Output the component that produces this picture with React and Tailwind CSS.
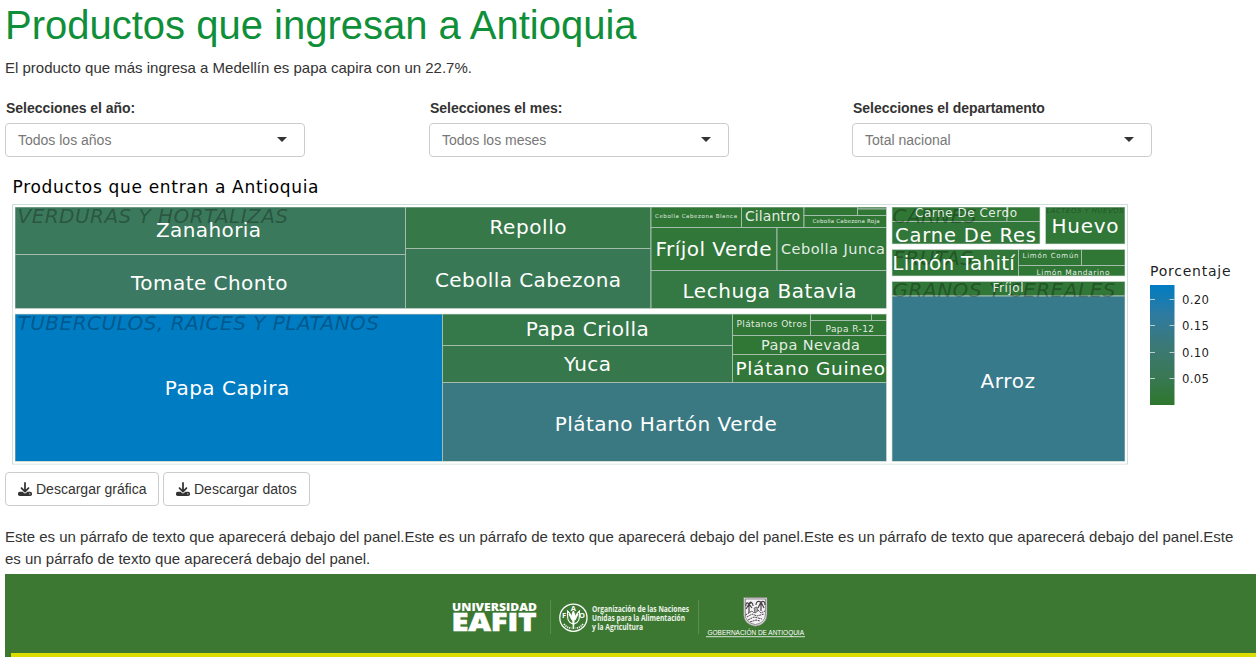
import { FaDownload } from "react-icons/fa6";

const LOW = "#307735";

// x, y, right, bottom, fill
const cells = [
  [15, 207, 405.5, 254.5, "#3b795c"],
  [15, 254.5, 405.5, 308.5, "#3c7963"],
  [405.5, 207, 651, 248.5, "#367848"],
  [405.5, 248.5, 651, 308.5, "#397855"],
  [651, 207, 741.5, 227.5, LOW],
  [741.5, 207, 804, 227.5, LOW],
  [804, 215.5, 886.5, 227.5, LOW],
  [804, 207, 857.5, 215.5, LOW],
  [857.5, 207, 886.5, 209, LOW],
  [857.5, 209, 886.5, 215.5, LOW],
  [651, 227.5, 777, 270.5, "#31773a"],
  [777, 227.5, 886.5, 270.5, "#31773a"],
  [651, 270.5, 886.5, 308.5, "#347843"],
  [15, 314, 442.5, 461.5, "#007cc3"],
  [442.5, 314, 732.5, 345.5, "#35784a"],
  [442.5, 345.5, 732.5, 382.5, "#36784b"],
  [442.5, 382.5, 886.5, 461.5, "#3a7982"],
  [732.5, 314, 810.5, 335.5, LOW],
  [810.5, 320.5, 886.5, 335.5, LOW],
  [810.5, 314, 871.5, 320.5, LOW],
  [871.5, 314, 886.5, 320.5, LOW],
  [732.5, 335.5, 886.5, 354.5, LOW],
  [732.5, 354.5, 886.5, 382.5, "#317739"],
  [892, 207, 1007, 221.5, LOW],
  [1007, 207, 1040, 221.5, LOW],
  [892, 221.5, 1040, 244, "#317739"],
  [1045.5, 207, 1125, 244, "#317738"],
  [892, 249.5, 1018.5, 276, "#317738"],
  [1018.5, 249.5, 1081.5, 265.5, LOW],
  [1081.5, 249.5, 1125, 265.5, LOW],
  [1018.5, 265.5, 1125, 276, LOW],
  [892, 281.5, 1125, 296, "#317738"],
  [892, 296, 1125, 461.5, "#377a8b"],
];

// text, x, baseline, width, size
const groups = [
  ["VERDURAS Y HORTALIZAS", 17.5, 223, 270.5, 20],
  ["TUBERCULOS, RAICES Y PLATANOS", 17.5, 330, 361.5, 20],
  ["CARNES", 892.5, 223, 84, 20],
  ["LACTEOS Y HUEVOS", 1046.5, 213, 77, 7],
  ["FRUTAS", 893, 265, 80, 20],
  ["GRANOS Y CEREALES", 892.5, 297, 223, 20],
];

const labels = [
  ["Zanahoria", 156, 237, 105, 20],
  ["Tomate Chonto", 131, 290, 156.5, 20],
  ["Repollo", 489.5, 234, 77, 20],
  ["Cebolla Cabezona", 435, 287, 186, 20],
  ["Cebolla Cabezona Blanca", 655, 218, 82, 5.5],
  ["Cilantro", 745, 221, 55, 14],
  ["Cebolla Cabezona Roja", 812.5, 223, 67, 5.5],
  ["Fríjol Verde", 655.5, 256, 116, 20],
  ["Cebolla Junca", 781, 254, 104, 14.5],
  ["Lechuga Batavia", 682.5, 298, 174, 20],
  ["Papa Capira", 164.8, 395, 124.5, 20],
  ["Papa Criolla", 525.8, 336, 123, 20],
  ["Yuca", 564, 371, 47, 20],
  ["Plátano Hartón Verde", 554.7, 431, 222, 20],
  ["Plátanos Otros", 736.5, 327, 70.5, 9],
  ["Papa R-12", 825.5, 332, 48.5, 9],
  ["Papa Nevada", 761, 350, 99, 14.5],
  ["Plátano Guineo", 735.5, 375, 149.5, 18.5],
  ["Carne De Cerdo", 915, 217, 102, 12],
  ["Carne De Res", 895, 241.5, 141, 19.5],
  ["Huevo", 1051.5, 233, 67, 20],
  ["Limón Tahití", 892.3, 269.5, 122.5, 20],
  ["Limón Común", 1022.5, 258, 56, 7],
  ["Limón Mandarino", 1036.5, 275, 73, 7.5],
  ["Fríjol", 992.5, 292, 31, 12],
  ["Arroz", 980.5, 388, 54.5, 20],
];

const ticks = [
  ["0.20", 299.5, 304],
  ["0.15", 325.5, 330],
  ["0.10", 352.5, 357],
  ["0.05", 378.5, 383],
];

function ChartText({ item, ...rest }) {
  const [text, x, y, width, size] = item;
  return (
    <text x={x} y={y} textLength={width} fontSize={size} {...rest}>
      {text}
    </text>
  );
}

function Treemap() {
  return (
    <svg
      viewBox="5 170 1251 302"
      className="block h-[302px] w-[1251px] font-['DejaVu_Sans',sans-serif]"
    >
      <defs>
        <linearGradient id="scale" x1="0" y1="0" x2="0" y2="1">
          <stop offset="0" stopColor="#007cc3" />
          <stop offset="0.25" stopColor="#2f7ba0" />
          <stop offset="0.5" stopColor="#3b7978" />
          <stop offset="0.75" stopColor="#3a7856" />
          <stop offset="1" stopColor="#2e772d" />
        </linearGradient>
      </defs>
      <ChartText item={["Productos que entran a Antioquia", 12.5, 193, 306, 17]} />
      <rect x="12.5" y="204.5" width="1115" height="259.5" fill="none" stroke="#cfdfdb" />
      {cells.map(([x, y, r, b, fill], i) => (
        <rect key={i} x={x} y={y} width={r - x} height={b - y} fill={fill} stroke="#a3bcab" strokeWidth="1" />
      ))}
      <g fill="none" stroke="#fff">
        <path d="M12.8 311.3H889.2M889.2 207V462M1042.8 207V247M889.2 246.8H1126M889.2 278.8H1126" strokeWidth="5" />
        <path d="M14 206H1126M14 462.5H1126M14 206V462.5M1126 206V462.5" strokeWidth="2" />
      </g>
      <g fill="#000" fillOpacity="0.3" fontStyle="italic">
        {groups.map((g) => (
          <ChartText key={g[0]} item={g} />
        ))}
      </g>
      <g fill="#fff">
        {labels.map((l) => (
          <ChartText key={l[0]} item={l} fillOpacity={l[4] < 16 ? 0.88 : 1} />
        ))}
      </g>
      <ChartText item={["Porcentaje", 1150, 276, 80.5, 14]} fillOpacity="0.9" />
      <rect x="1150" y="285" width="24.5" height="120" fill="url(#scale)" />
      {ticks.map(([label, ty, by]) => (
        <g key={label}>
          <path d={`M1150 ${ty}h5M1169.5 ${ty}h5`} stroke="#b9d0cf" />
          <ChartText item={[label, 1182, by, 27, 11.7]} fillOpacity="0.9" />
        </g>
      ))}
    </svg>
  );
}

function Select({ label, value, width }) {
  return (
    <div className={width}>
      <div className="mb-[5px] h-5 pl-px text-[14px] leading-5 font-bold tracking-[-0.04px]">{label}</div>
      <div className="flex h-[34px] w-[300px] items-center justify-between rounded border border-[#ccc] pr-[17px] pl-3 text-[14px] text-[#777]">
        <span>{value}</span>
        <svg viewBox="0 0 10 5" className="mb-px h-[5px] w-[10px]">
          <path d="M0 0H10L5 5Z" fill="#333" />
        </svg>
      </div>
    </div>
  );
}

function DownloadButton({ children, width }) {
  return (
    <button
      className={`flex h-[34px] items-center gap-1 rounded border border-[#ccc] bg-white pl-3 text-[14px] whitespace-nowrap ${width}`}
    >
      <FaDownload className="size-[14px] shrink-0" />
      <span>{children}</span>
    </button>
  );
}

function Logos() {
  return (
    <svg viewBox="440 590 380 60" className="block h-[60px] w-[380px]" fill="#fff">
      <g className="font-['Open_Sans',sans-serif]" fontWeight="800">
        <text x="452" y="610.5" fontSize="10.8" textLength="85" lengthAdjust="spacingAndGlyphs">UNIVERSIDAD</text>
        <text x="451.5" y="631.2" fontSize="24.5" textLength="85" lengthAdjust="spacingAndGlyphs" stroke="#fff" strokeWidth="0.6">EAFIT</text>
      </g>
      <path d="M550.5 600V634M698.5 600V634" stroke="#5b8d51" />
      <g fill="none" stroke="#fff">
        <circle cx="573.4" cy="617.7" r="13.6" strokeWidth="1.3" />
        <path d="M573.4 611V629" strokeWidth="1.6" />
        <path d="M573 624C566 622 568 616 567.5 611C571 614 573 618 573.4 624C574 618 576 614 579.5 611C579 616 581 622 574 624M569 614L572 620M578 614L575 620" strokeWidth="1.1" />
        <path d="M564 624Q567 628 571.5 628M583 624Q580 628 575.5 628" strokeWidth="1.6" strokeDasharray="1.3 .8" />
        <ellipse cx="573.4" cy="616" rx="1.7" ry="4" fill="#fff" strokeWidth=".5" strokeDasharray="1 .7" />
      </g>
      <g className="font-['Open_Sans',sans-serif]" fontWeight="700" fontSize="7.5">
        <text x="562" y="618">F</text>
        <text x="570.7" y="611">A</text>
        <text x="579" y="618">O</text>
      </g>
      <g className="font-['Open_Sans',sans-serif]" fontWeight="700" fontSize="8.4" fill="#edf4eb">
        <text x="592" y="612.3" textLength="97" lengthAdjust="spacingAndGlyphs">Organización de las Naciones</text>
        <text x="592" y="621.3" textLength="93" lengthAdjust="spacingAndGlyphs">Unidas para la Alimentación</text>
        <text x="592" y="630.2" textLength="51" lengthAdjust="spacingAndGlyphs">y la Agricultura</text>
      </g>
      <path d="M743.7 597.5H767V614Q767 624.5 755.4 626.2Q743.7 624.5 743.7 614Z" fill="#e5e2e5" stroke="#777b76" strokeWidth=".6" />
      <path d="M745.3 599H765.4V614Q765.4 623 755.4 624.6Q745.3 623 745.3 614Z" fill="#f6f3f6" stroke="#514f51" strokeWidth=".6" />
      <g fill="none" stroke="#454345" strokeWidth="1">
        <path d="M749 604V613M748.8 604Q746 601 745.8 606M749 604Q753 601 753 606M749 604Q750 601 752 603M749 604L746 609M749 604L752 608" strokeWidth="1.2" />
        <path d="M761 602V611M761 602Q756 600 756 605M761 602Q765 600 765 605M761 602L758 608M761 602L764 608" strokeWidth="1.2" />
        <path d="M745.5 615L752 611L754 613L757 609L761 613L765 611M747 617L752 614L757 616L764 614M748 620L754 617L762 619M750 622L756 620L760 621" strokeDasharray="2 .7" />
        <path d="M754 608L757 607L758 611L755 613Z" fill="#aaa6aa" strokeWidth=".6" />
      </g>
      <text x="707.5" y="635.1" fontSize="7.6" textLength="96.5" lengthAdjust="spacingAndGlyphs" className="font-['Liberation_Sans',sans-serif]">GOBERNACIÓN DE ANTIOQUIA</text>
      <path d="M706 636.7H805" stroke="#fff" strokeWidth=".8" />
    </svg>
  );
}

export default function App() {
  return (
    <div className="h-[657px] w-[1256px] overflow-hidden bg-white pl-[5px] font-['Liberation_Sans',Arial,sans-serif] text-[#333]">
      <h1 className="h-[57px] text-[40px] leading-[50px] whitespace-nowrap text-[#0f8f39]">
        Productos que ingresan a Antioquia
      </h1>
      <p className="h-[41px] text-[15px] leading-[22px]">
        El producto que más ingresa a Medellín es papa capira con un 22.7%.
      </p>
      <div className="flex h-[72px]">
        <Select label="Selecciones el año:" value="Todos los años" width="w-[424px]" />
        <Select label="Selecciones el mes:" value="Todos los meses" width="w-[423px]" />
        <Select label="Selecciones el departamento" value="Total nacional" width="w-[404px]" />
      </div>
      <Treemap />
      <div className="flex gap-1">
        <DownloadButton width="w-[154px]">Descargar gráfica</DownloadButton>
        <DownloadButton width="w-[147px]">Descargar datos</DownloadButton>
      </div>
      <p className="mt-5 h-12 text-[15px] leading-[22px]">
        Este es un párrafo de texto que aparecerá debajo del panel.Este es un párrafo de texto que aparecerá debajo del
        panel.Este es un párrafo de texto que aparecerá debajo del panel.Este
        <br />
        es un párrafo de texto que aparecerá debajo del panel.
      </p>
      <footer className="h-[83px] bg-[#3c7832]">
        <div className="flex h-[79px] pt-4 pl-[435px]">
          <Logos />
        </div>
        <div className="ml-[6px] h-1 bg-[#dcdc00]" />
      </footer>
    </div>
  );
}
